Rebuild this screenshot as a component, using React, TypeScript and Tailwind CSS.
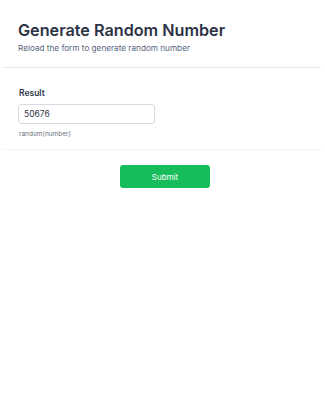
import React from 'react';

export default function App() {
  return (
    <div className="min-h-[400px] w-[325px] bg-white font-['Inter',sans-serif]">
      <div className="px-[18px] pt-[20px] pb-[14px]">
        <h1 className="text-[16.2px] font-semibold leading-[20px] text-[#2c3345]">Generate Random Number</h1>
        <p className="mt-[3px] text-[8.2px] leading-[10px] text-[#57647e]">Reload the form to generate random number</p>
      </div>
      <div className="mx-[4px] border-t border-[#e3e5ea]" />
      <div className="px-[18px] pt-[20px] pb-[10px]">
        <label className="block pl-px text-[8.5px] font-semibold leading-[11px] text-[#2c3345]">Result</label>
        <input
          readOnly
          value="50676"
          className="mt-[5px] block h-[20px] w-[137px] rounded-[3px] border border-[#d8dbe3] px-[5px] text-[8.5px] text-[#2c3345] outline-none"
        />
        <p className="mt-[6px] pl-px text-[6.5px] leading-[9px] text-[#6b7280]">random(number)</p>
      </div>
      <div className="mx-[4px] border-t border-[#f1f2f5]" />
      <div className="flex justify-center pt-[15px] pl-[5px]">
        <button className="h-[23px] w-[90px] rounded-[3px] bg-[#18bd5b] text-[8px] text-white">Submit</button>
      </div>
    </div>
  );
}
